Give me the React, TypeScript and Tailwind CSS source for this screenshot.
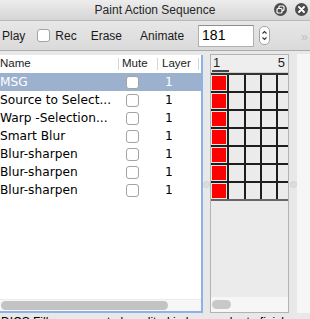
import React from "react";

const rows = [
  "MSG",
  "Source to Select...",
  "Warp -Selection...",
  "Smart Blur",
  "Blur-sharpen",
  "Blur-sharpen",
  "Blur-sharpen",
];

function Check({ className = "" }: { className?: string }) {
  return (
    <span
      className={`block h-[13px] w-[13px] rounded-[3px] border border-[#a3a3a3] bg-white ${className}`}
    />
  );
}

function Grid() {
  return (
    <div className="flex w-[77px] shrink-0 flex-col">
      {rows.map((_, i) => (
        <div key={i} className="flex shrink-0 flex-col">
          <div className={`h-[2px] shrink-0 ${i === 0 ? "bg-[#333]" : "bg-[#1e1e1e]"}`} />
          <div className="flex h-[16px] shrink-0">
            <div className="h-[16px] w-[16px] shrink-0 border border-[#e4e4e4] bg-[#ff0000]" />
            {[0, 1, 2, 3].map((c) => (
              <React.Fragment key={c}>
                <div className="h-[16px] w-[2px] shrink-0 bg-[#1e1e1e]" />
                <div className={c === 3 ? "flex-1" : c === 0 ? "w-[15px] shrink-0" : "w-[14px] shrink-0"} />
              </React.Fragment>
            ))}
          </div>
        </div>
      ))}
      <div className="h-[2px] shrink-0 bg-[#666]" />
    </div>
  );
}

export default function App() {
  return (
    <div className="flex h-[319px] w-[310px] flex-col overflow-hidden bg-[#e8e8e8] font-['Liberation_Sans',sans-serif] text-[#1a1a1a]">
      {/* title bar */}
      <div className="relative flex h-[21px] shrink-0 items-center justify-center border-b border-[#b9b9b9] bg-gradient-to-b from-[#ededed] to-[#d5d5d5]">
        <span className="text-[12px] text-[#262626]">Paint Action Sequence</span>
        <div className="absolute right-[2px] top-[3px] flex gap-[8px]">
          <span className="flex h-[13px] w-[13px] items-center justify-center rounded-full bg-[#4d4d4d]">
            <svg width="9" height="9" viewBox="0 0 9 9" fill="none" stroke="white" strokeWidth="1.2">
              <rect x="3" y="1" width="5" height="4.5" rx="1" />
              <rect x="1" y="3.5" width="5" height="4.5" rx="1" fill="#4d4d4d" />
            </svg>
          </span>
          <span className="flex h-[13px] w-[13px] items-center justify-center rounded-full bg-[#4d4d4d]">
            <svg width="7" height="7" viewBox="0 0 7 7" stroke="white" strokeWidth="1.8" strokeLinecap="round">
              <path d="M1 1L6 6M6 1L1 6" />
            </svg>
          </span>
        </div>
      </div>

      {/* toolbar */}
      <div className="relative flex h-[30px] shrink-0 items-center border-b border-[#acacac] bg-gradient-to-b from-[#e7e7e7] to-[#dadada] text-[12px]">
        <span className="ml-[2px]">Play</span>
        <Check className="ml-[12px]" />
        <span className="ml-[5px]">Rec</span>
        <span className="ml-[14px]">Erase</span>
        <span className="ml-[18px]">Animate</span>
        <div className="ml-[14px] flex h-[22px] w-[56px] items-center border border-[#b0b0b0] border-t-[#8e8e8e] bg-white pl-[3px] text-[14px] text-black">
          181
        </div>
        <div className="ml-[5px] flex h-[19px] w-[11px] flex-col items-center justify-center rounded-[5px] border border-[#a5a5a5] bg-white">
          <svg width="7" height="13" viewBox="0 0 7 13" fill="none" stroke="#333" strokeWidth="1.1">
            <path d="M1.5 4.5L3.5 2.5L5.5 4.5" />
            <path d="M1.5 8.5L3.5 10.5L5.5 8.5" />
          </svg>
        </div>
        <span className="absolute right-[2px] top-[6px] text-[13px] text-[#c2c2c2]">»</span>
      </div>

      {/* panels */}
      <div className="relative mt-[3px] flex h-[259px] shrink-0">
        {/* table */}
        <div className="mt-[1px] flex h-[258px] w-[203px] flex-col border-b-2 border-r-2 border-[#8db3e6] bg-white">
          <div className="flex h-[18px] shrink-0 items-center text-[11.5px] text-[#222]">
            <span className="w-[118px]">Name</span>
            <span className="h-[12px] w-px bg-[#d6d6d6]" />
            <span className="w-[38px] pl-[3px]">Mute</span>
            <span className="h-[12px] w-px bg-[#d6d6d6]" />
            <span className="w-[40px] pl-[4px]">Layer</span>
            <span className="h-[12px] w-px bg-[#d6d6d6]" />
          </div>
          {rows.map((name, i) => (
            <div
              key={i}
              className={`flex h-[18px] shrink-0 items-center font-['DejaVu_Sans',sans-serif] text-[12.2px] ${
                i === 0 ? "bg-[#9cb1ce] text-white" : "text-black"
              }`}
            >
              <span className="w-[118px] whitespace-nowrap">{name}</span>
              <span className="flex w-[46px] justify-start pl-[8px]">
                <Check />
              </span>
              <span className="pl-[1px]">1</span>
            </div>
          ))}
          <div className="flex-1" />
          <div className="flex h-[12px] shrink-0 items-center border-t border-[#ececec] bg-[#f7f7f7]">
            <span className="ml-[1px] h-[9px] w-[167px] rounded-full bg-[#c3c3c3]" />
          </div>
        </div>

        {/* splitter dot */}
        <span className="absolute left-[203px] top-[127px] h-[7px] w-[7px] rounded-full border border-[#d2d2d2] bg-[#dcdcdc]" />

        {/* sequence panel */}
        <div className="ml-[7px] flex h-[259px] w-[79px] flex-col border border-[#b3b3b3] bg-[#ebebeb]">
          <div className="relative h-[18px] shrink-0 border-b border-[#cfcfcf] bg-[#eeeeee] text-[13px] text-[#222]">
            <span className="absolute left-[2px] top-[1px] leading-[14px]">1</span>
            <span className="absolute left-[1px] top-[15px] h-[2px] w-[17px] bg-[#444]" />
            <span className="absolute right-[3px] top-[1px] leading-[14px]">5</span>
          </div>
          <Grid />
          <div className="flex-1" />
          <div className="flex h-[15px] shrink-0 items-center bg-[#f6f6f6]">
            <span className="ml-[1px] h-[9px] w-[19px] rounded-full bg-[#c8c8c8]" />
          </div>
        </div>

        <span className="absolute left-[290px] top-[127px] h-[7px] w-[7px] rounded-full border border-[#d2d2d2] bg-[#dcdcdc]" />
        <div className="ml-[8px] h-full flex-1 bg-[#f6f6f6]" />
      </div>

      {/* status line (clipped) */}
      <div className="overflow-hidden whitespace-nowrap pl-[1px] pt-[2px] text-[12px] leading-[14px] text-black">
        DICS Fill sequence to be edited in layer order to finish
      </div>
    </div>
  );
}
